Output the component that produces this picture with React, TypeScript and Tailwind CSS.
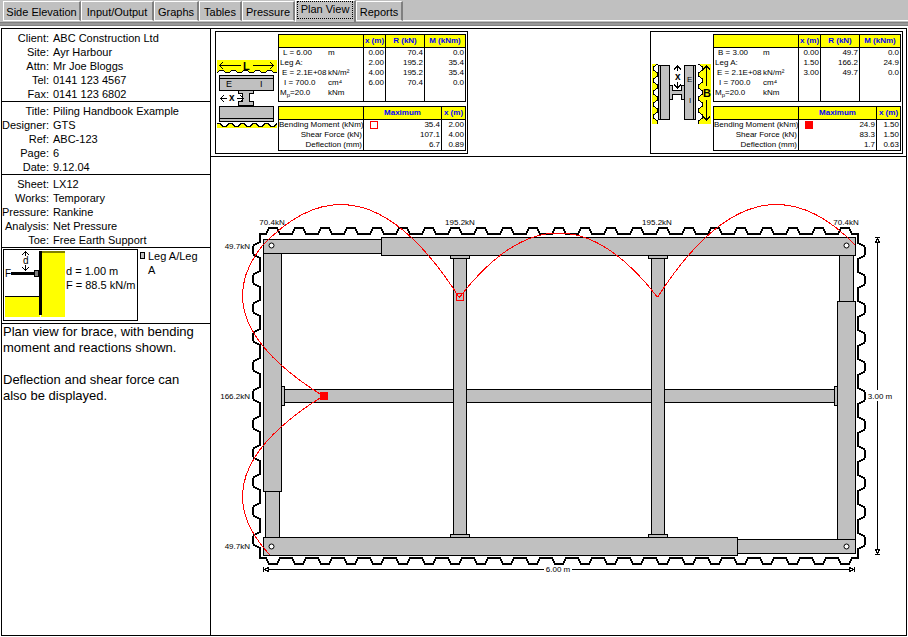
import React from "react";

const TABS = [
  { name: "Side Elevation", width: "w-[78px]" },
  { name: "Input/Output", width: "w-[73px]" },
  { name: "Graphs", width: "w-[45px]" },
  { name: "Tables", width: "w-[43px]" },
  { name: "Pressure", width: "w-[53px]" },
  { name: "Plan View", width: "w-[61px]" },
  { name: "Reports", width: "w-[47px]" },
];

function TabBar() {
  return (
    <nav className="flex h-[22px] items-end bg-[#c0c0c0] pl-[3px]" role="tablist">
      {TABS.map((t) => {
        const selected = t.name === "Plan View";
        return (
          <button
            key={t.name}
            type="button"
            role="tab"
            aria-selected={selected}
            className={
              "shrink-0 whitespace-nowrap border-l border-t border-white border-r-2 border-r-[#808080] bg-[#c0c0c0] text-[11px] leading-[14px] " +
              t.width +
              (selected
                ? " h-[22px] px-px pb-[3px]"
                : " h-5 border-b border-b-white pt-[2px] mb-px")
            }
          >
            {selected ? (
              <span className="block border border-dotted border-black pb-[2px]">{t.name}</span>
            ) : (
              t.name
            )}
          </button>
        );
      })}
      <div className="mb-px h-px grow bg-white" />
    </nav>
  );
}

function Details({ rows }: { rows: [string, string][] }) {
  return (
    <dl className="border-b border-black pt-[2px] text-[11px] leading-[14px]">
      {rows.map(([k, v]) => (
        <div key={k} className="flex gap-1 whitespace-nowrap">
          <dt className="w-[47px] text-right">{k}:</dt>
          <dd>{v}</dd>
        </div>
      ))}
    </dl>
  );
}

function PileSketch() {
  return (
    <svg width="62" height="70" viewBox="0 0 62 70" shapeRendering="crispEdges" aria-label="Pile section" className="shrink-0">
      <rect x="37" y="1" width="24" height="66" fill="#ff0" />
      <rect x="37" y="1" width="24" height="2" fill="#808000" />
      <rect x="1" y="47" width="35" height="20" fill="#ff0" />
      <rect x="1" y="46" width="35" height="1" />
      <rect x="7" y="22" width="25" height="3" />
      <rect x="35" y="1" width="3" height="64" />
      <rect x="30.500" y="20.500" width="4" height="6" fill="#808080" stroke="#000" />
      <path d="M18 5l3.500-3.500L25 5M21.500 2v4M18 17l3.500 3.500L25 17M21.500 15v6" fill="none" stroke="#000" />
      <text x="19" y="14" fontSize="10">d</text>
      <text x="1" y="27" fontSize="10">F</text>
    </svg>
  );
}

function Sidebar() {
  return (
    <aside className="w-[209px] shrink-0 border-l border-black">
      <Details
        rows={[
          ["Client", "ABC Construction Ltd"],
          ["Site", "Ayr Harbour"],
          ["Attn", "Mr Joe Bloggs"],
          ["Tel", "0141 123 4567"],
          ["Fax", "0141 123 6802"],
        ]}
      />
      <Details
        rows={[
          ["Title", "Piling Handbook Example"],
          ["Designer", "GTS"],
          ["Ref", "ABC-123"],
          ["Page", "6"],
          ["Date", "9.12.04"],
        ]}
      />
      <Details
        rows={[
          ["Sheet", "LX12"],
          ["Works", "Temporary"],
          ["Pressure", "Rankine"],
          ["Analysis", "Net Pressure"],
          ["Toe", "Free Earth Support"],
        ]}
      />
      <div className="flex border-b border-black pb-[2px] pl-px pt-px text-[11px] leading-[14px]">
        <div className="flex h-[72px] w-[135px] shrink-0 items-center border border-black">
          <PileSketch />
          <p className="whitespace-nowrap pb-[14px]">
            d = 1.00 m
            <br />F = 88.5 kN/m
          </p>
        </div>
        <div className="flex gap-[3px] pl-[2px]">
          <span className="mt-[3px] h-[7px] w-[5px] shrink-0 border border-black bg-[#c0c0c0]" />
          <p className="w-14">Leg A/Leg A</p>
        </div>
      </div>
      <div className="pl-px text-[13px] leading-4">
        <p>
          Plan view for brace, with bending
          <br />
          moment and reactions shown.
        </p>
        <p className="pt-4">
          Deflection and shear force can
          <br />
          also be displayed.
        </p>
      </div>
    </aside>
  );
}

const TH = "whitespace-nowrap border border-black bg-[#ff0] p-0 text-center font-bold text-[#00f]";

type Brace = {
  dim: string;
  points: [string, string, string][];
  maxima: [string, string, string][];
  filled: boolean;
};

function BraceTables({ dim, points, maxima, filled }: Brace) {
  const props: [React.ReactNode, string][] = [
    [<span className="pl-[3px]">{dim}</span>, "m"],
    ["Leg A:", ""],
    [<span className="pl-[2px]">E = 2.1E+08</span>, "kN/m²"],
    [<span className="pl-[4px]">I = 700.0</span>, "cm⁴"],
    [
      <>
        M<sub className="text-[6px] leading-none">p</sub>=20.0
      </>,
      "kNm",
    ],
  ];
  const cell = "border-x border-black p-0 pr-px text-right align-top";
  return (
    <div className="flex flex-col gap-1 text-[8px] leading-[10px]">
      <table className="w-[187px] table-fixed border-collapse border border-black">
        <colgroup>
          <col className="w-[85px]" />
          <col className="w-[22px]" />
          <col className="w-[39px]" />
          <col className="w-[41px]" />
        </colgroup>
        <thead>
          <tr className="h-[13px]">
            <th className={TH} />
            <th className={TH}>x (m)</th>
            <th className={TH}>R (kN)</th>
            <th className={TH}>M (kNm)</th>
          </tr>
        </thead>
        <tbody>
          {props.map(([label, unit], i) => (
            <tr key={i} className="h-[10px] last:h-[13px]">
              <td className="border-x border-black p-0 pl-px align-top">
                <div className="flex h-[10px] whitespace-nowrap">
                  <span className="w-[48px]">{label}</span>
                  <span>{unit}</span>
                </div>
              </td>
              {[0, 1, 2].map((c) => (
                <td key={c} className={cell}>
                  {points[i] ? points[i][c] : ""}
                </td>
              ))}
            </tr>
          ))}
        </tbody>
      </table>
      <table className="w-[187px] table-fixed border-collapse border border-black">
        <colgroup>
          <col className="w-[85px]" />
          <col className="w-[78px]" />
          <col className="w-[24px]" />
        </colgroup>
        <thead>
          <tr className="h-[13px]">
            <th className={TH} />
            <th className={TH}>Maximum</th>
            <th className={TH}>x (m)</th>
          </tr>
        </thead>
        <tbody>
          {maxima.map(([label, max, x], i) => (
            <tr key={label} className="h-[10px]">
              <td className={cell + " whitespace-nowrap"}>{label}</td>
              <td className={cell}>
                <div className="flex items-center justify-between pl-[6px]">
                  <span
                    className={
                      i > 0
                        ? "size-2"
                        : filled
                          ? "size-2 bg-[#f00]"
                          : "size-2 border border-[#f00]"
                    }
                  />
                  <span>{max}</span>
                </div>
              </td>
              <td className={cell}>{x}</td>
            </tr>
          ))}
        </tbody>
      </table>
    </div>
  );
}

function LengthSketch() {
  const top = "h-3l-3-2h-3l-3 2".repeat(5);
  const bottom = "h3l3 3h3l3-3".repeat(5);
  return (
    <svg width="61" height="69" viewBox="0 0 61 69" className="mt-1 shrink-0" shapeRendering="crispEdges" aria-label="Brace in length direction">
      <path d={`M0 0H60V13${top}Z`} fill="#ff0" />
      <path d={`M60 12.500${top}`} fill="none" stroke="#000" />
      <path d={`M0 63${bottom}V68H0Z`} fill="#ff0" />
      <path d={`M0 63.500${bottom}`} fill="none" stroke="#000" />
      <path d="M2.500 5.500h21M35.500 5.500h21M6 2l-3.500 3.500L6 9M53 2l3.500 3.500L53 9" fill="none" stroke="#000" />
      <text x="26" y="10" fontSize="11" fontWeight="700">L</text>
      <g fill="#c0c0c0" stroke="#000">
        <path d="M21.500 29.500h15v4h-4v8h4v4h-15v-4h4v-8h-4Z" />
        <rect x="2.500" y="15.500" width="54" height="15" />
        <path d="M2.500 18.500h54" />
        <rect x="2.500" y="46.500" width="54" height="15" />
        <path d="M2.500 58.500h54" />
      </g>
      <path d="M3.500 38.500h6M19.500 38.500h7M7 35l-3.500 3.500L7 42M23 35l3.500 3.500L23 42" fill="none" stroke="#000" />
      <text x="12" y="41" fontSize="10" fontWeight="700">x</text>
      <text x="9" y="27" fontSize="9">E</text>
      <text x="43" y="27" fontSize="9">I</text>
    </svg>
  );
}

function BreadthSketch() {
  const left = "l-4 3v3l4 3v3".repeat(5);
  const right = "l4 3v3l-4 3v3".repeat(5);
  return (
    <svg width="61" height="62" viewBox="0 0 61 62" className="mt-1 shrink-0" shapeRendering="crispEdges" aria-label="Brace in breadth direction">
      <path d={`M0 1H5${left}H0Z`} fill="#ff0" />
      <path d={`M5.500 1${left}`} fill="none" stroke="#000" />
      <path d={`M59 1H46${right}H59Z`} fill="#ff0" />
      <path d={`M46.500 1${right}`} fill="none" stroke="#000" />
      <g fill="#c0c0c0" stroke="#000">
        <path d="M17.500 22.500h3v5h9v-5h3v14h-3v-5h-9v5h-3Z" />
        <rect x="6.500" y="2.500" width="11" height="54" />
        <path d="M8.500 2.500v54" />
        <rect x="32.500" y="2.500" width="11" height="54" />
        <path d="M41.500 2.500v54" />
      </g>
      <path d="M25.500 3v5M25.500 19v6M22 6.500L25.500 3L29 6.500M22 21.500l3.500 3.500l3.500-3.500M54.500 3v20M54.500 37v20M51 6.500L54.500 3L58 6.500M51 53.500l3.500 3.500l3.500-3.500" fill="none" stroke="#000" />
      <text x="23" y="17" fontSize="10" fontWeight="700">x</text>
      <text x="51" y="34" fontSize="11" fontWeight="700">B</text>
      <text x="35" y="19" fontSize="8">E</text>
      <text x="37" y="40" fontSize="8">I</text>
    </svg>
  );
}

function BraceCard({ sketch, brace }: { sketch: React.ReactNode; brace: Brace }) {
  return (
    <section className="flex w-[253px] shrink-0 items-center justify-between border border-black px-px py-[2px]">
      {sketch}
      <BraceTables {...brace} />
    </section>
  );
}

/* Quadratic path for the parabola y = k + a(x - h)^2 between two abscissae. */
function parabola(x1: number, x2: number, h: number, k: number, a: number, vertical = false) {
  const f = (x: number) => k + a * (x - h) * (x - h);
  const pts = [
    [x1, f(x1)],
    [(x1 + x2) / 2, k + a * (x1 - h) * (x2 - h)],
    [x2, f(x2)],
  ].map(([p, q]) => (vertical ? `${q} ${p}` : `${p} ${q}`));
  return `M${pts[0]}Q${pts[1]} ${pts[2]}`;
}

function sheetPiles() {
  let d = "M260 235V234";
  for (let i = 0; i < 23; i++) d += `H${266 + 26 * i}l3 -6h8l3 6`;
  d += "H858";
  for (let i = 0; i < 11; i++) d += `V${243 + 29 * i}l6 3l1 2v6l-1 2l-6 3`;
  d += "V558";
  for (let i = 22; i >= 0; i--) d += `H${280 + 26 * i}l-3 6h-8l-3 -6`;
  d += "H260";
  for (let i = 10; i >= 0; i--) d += `V${258 + 29 * i}l-6 -3l-1 -2v-6l1 -2l6 -3`;
  return d + "Z";
}

const MEMBERS: [number, number, number, number][] = [
  [284, 389, 550, 13],
  [281, 386, 3, 19],
  [834, 386, 3, 19],
  [453, 258, 13, 276],
  [651, 258, 13, 276],
  [450, 255, 19, 3],
  [648, 255, 19, 3],
  [450, 534, 19, 3],
  [648, 534, 19, 3],
  [265, 491, 14, 46],
  [263, 253, 18, 238],
  [839, 255, 14, 46],
  [837, 301, 18, 238],
  [263, 239, 118, 14],
  [381, 237, 474, 18],
  [737, 539, 118, 14],
  [263, 537, 474, 18],
];

const TOP_REACTIONS: [number, string][] = [
  [272, "70.4kN"],
  [460, "195.2kN"],
  [657, "195.2kN"],
  [846, "70.4kN"],
];

const SIDE_REACTIONS: [number, string][] = [
  [249, "49.7kN"],
  [399, "166.2kN"],
  [549, "49.7kN"],
];

function PlanDrawing() {
  return (
    <svg viewBox="211 157 695 478" preserveAspectRatio="xMinYMin meet" className="w-full" aria-label="Plan view of brace">
      <g shapeRendering="crispEdges">
        <path d={sheetPiles()} fill="none" stroke="#000" strokeWidth="2" />
        <g fill="#c0c0c0" stroke="#000">
          {MEMBERS.map(([x, y, w, h]) => (
            <rect key={`${x}-${y}`} x={x + 0.5} y={y + 0.5} width={w} height={h} />
          ))}
        </g>
        <path
          d="M265 569.500H544M572 569.500H853M877.500 239V390M877.500 401V553"
          fill="none"
          stroke="#000"
        />
        <path
          d="M263.500 567v5M268.500 567.500l-4 2l4 2ZM854.500 567v5M849.500 567.500l4 2l-4 2ZM875 237.500h5M875.500 242.500l2-4l2 4ZM875 554.500h5M875.500 549.500l2 4l2-4Z"
          fill="#fff"
          stroke="#000"
        />
      </g>
      <g fill="#fff" stroke="#000">
        <circle cx="271.500" cy="245.500" r="2.500" />
        <circle cx="846.500" cy="245.500" r="2.500" />
        <circle cx="271.500" cy="546.500" r="2.500" />
        <circle cx="846.500" cy="546.500" r="2.500" />
      </g>
      <g fill="none" stroke="#f00" shapeRendering="crispEdges">
        <path d={parabola(263, 459.5, 341, 204.5, 0.00666)} />
        <path d={parabola(459.5, 657.5, 558.5, 233, 0.00656)} />
        <path d={parabola(657.5, 855, 776.5, 204.5, 0.00655)} />
        <path d={parabola(245, 396, 295.5, 242.5, 0.00798, true)} />
        <path d={parabola(396, 555, 496.5, 242.5, 0.00798, true)} />
        <rect x="456.500" y="293.500" width="7" height="7" />
        <rect x="320" y="392" width="8" height="8" fill="#f00" stroke="none" />
      </g>
      <g fontSize="8">
        {TOP_REACTIONS.map(([x, label]) => (
          <text key={x} x={x} y="225" textAnchor="middle">
            {label}
          </text>
        ))}
        {SIDE_REACTIONS.map(([y, label]) => (
          <text key={y} x="250" y={y} textAnchor="end">
            {label}
          </text>
        ))}
        <text x="558" y="572" textAnchor="middle">6.00 m</text>
        <text x="880" y="399" textAnchor="middle">3.00 m</text>
      </g>
    </svg>
  );
}

export default function App() {
  return (
    <div className="flex min-h-screen flex-col bg-white pb-px font-['Liberation_Sans',Arial,sans-serif] text-black">
      <TabBar />
      <div className="h-1 border-b border-t border-[#808080] bg-[#999]" />
      <main className="mx-px mt-[2px] flex grow border-b border-t border-black">
        <Sidebar />
        <div className="flex min-w-0 grow flex-col border-x border-black">
          <header className="flex justify-between border-b border-black py-[2px] pl-1 pr-[3px]">
            <BraceCard
              sketch={<LengthSketch />}
              brace={{
                dim: "L = 6.00",
                points: [
                  ["0.00", "70.4", "0.0"],
                  ["2.00", "195.2", "35.4"],
                  ["4.00", "195.2", "35.4"],
                  ["6.00", "70.4", "0.0"],
                ],
                maxima: [
                  ["Bending Moment (kNm)", "35.4", "2.00"],
                  ["Shear Force (kN)", "107.1", "4.00"],
                  ["Deflection (mm)", "6.7", "0.89"],
                ],
                filled: false,
              }}
            />
            <BraceCard
              sketch={<BreadthSketch />}
              brace={{
                dim: "B = 3.00",
                points: [
                  ["0.00", "49.7", "0.0"],
                  ["1.50", "166.2", "24.9"],
                  ["3.00", "49.7", "0.0"],
                ],
                maxima: [
                  ["Bending Moment (kNm)", "24.9", "1.50"],
                  ["Shear Force (kN)", "83.3", "1.50"],
                  ["Deflection (mm)", "1.7", "0.63"],
                ],
                filled: true,
              }}
            />
          </header>
          <PlanDrawing />
        </div>
      </main>
    </div>
  );
}
